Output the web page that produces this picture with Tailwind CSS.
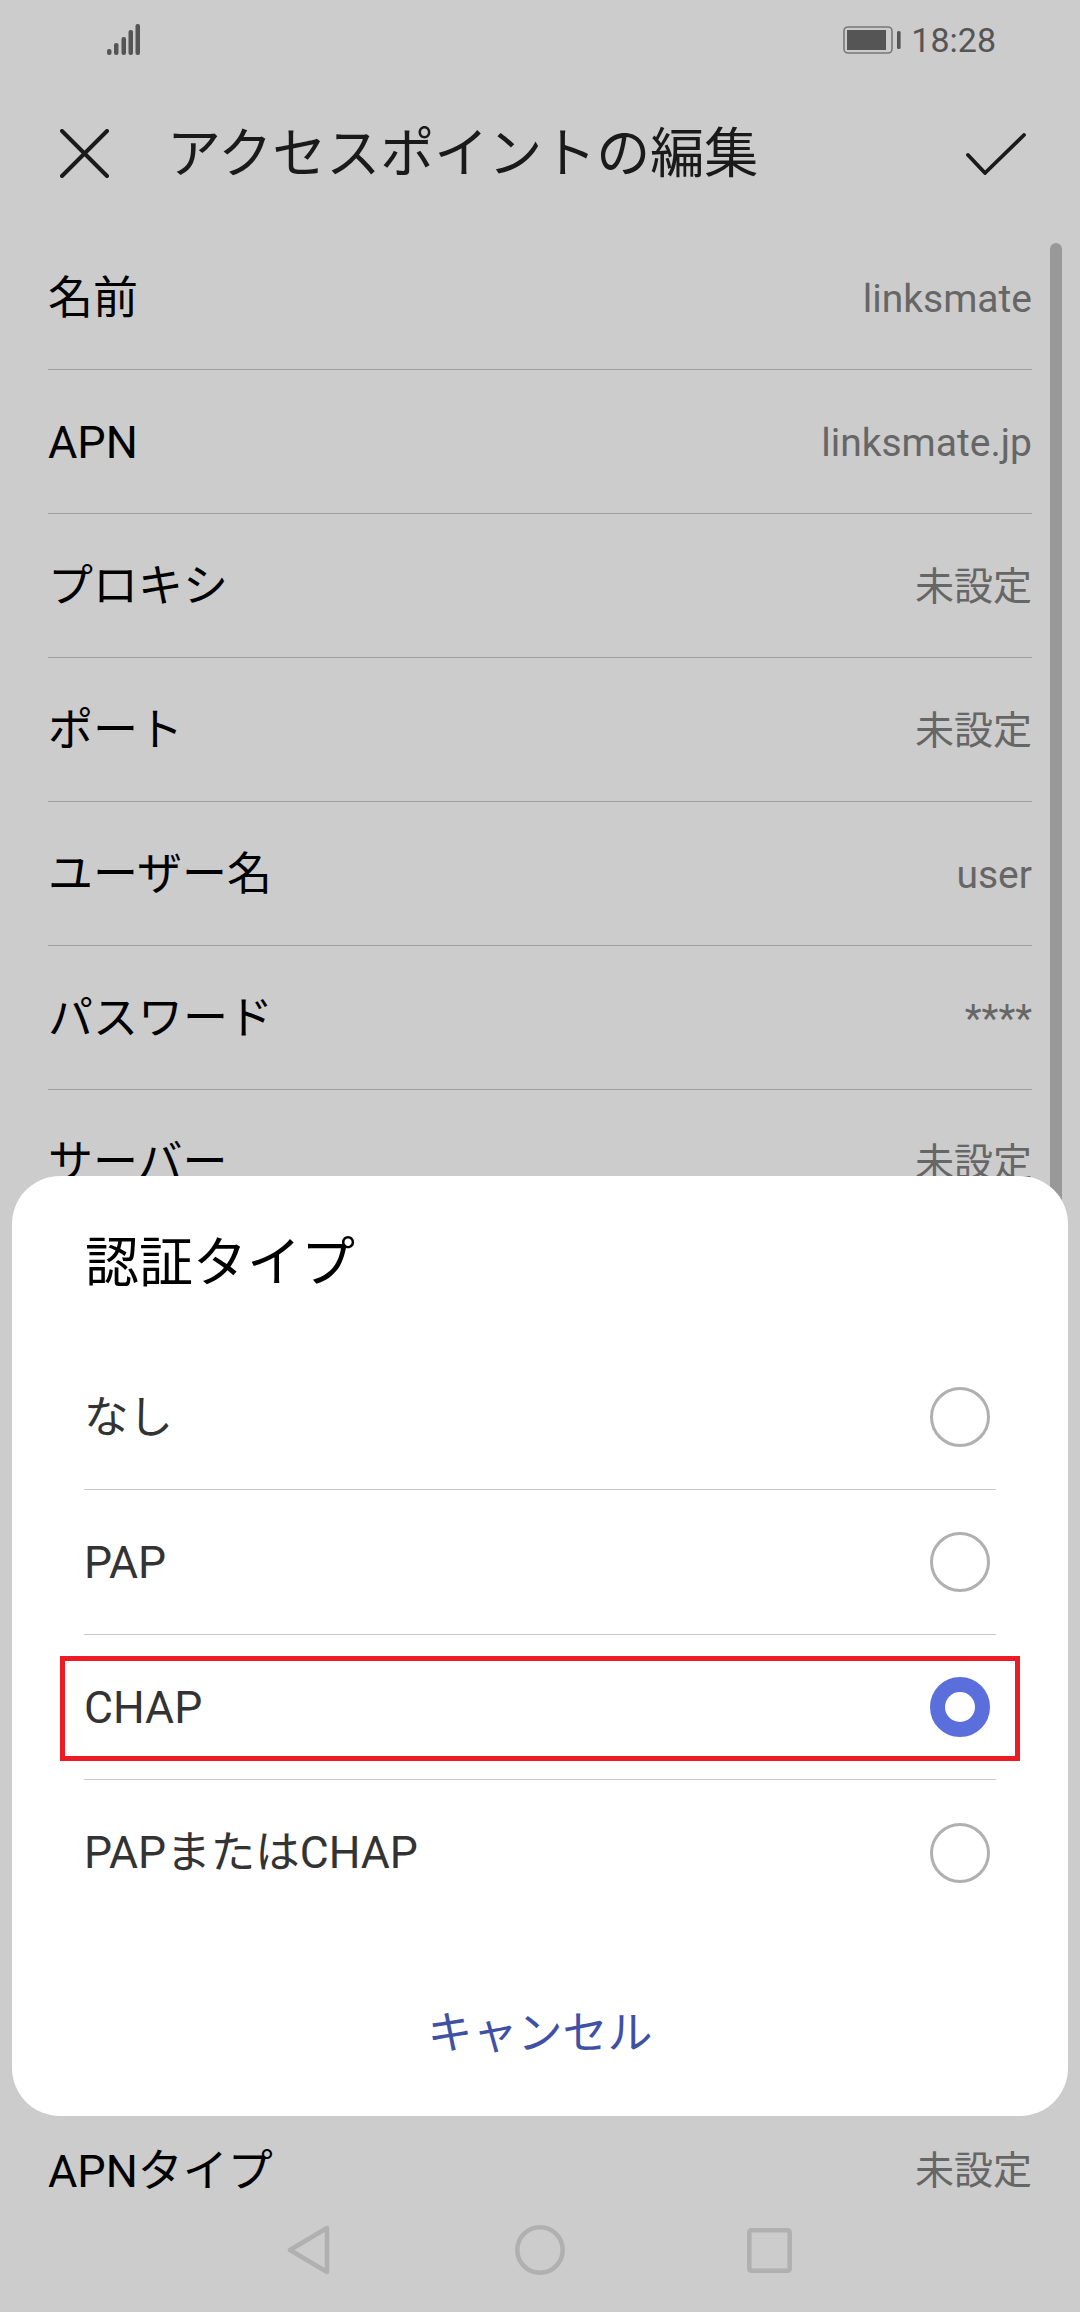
<!DOCTYPE html>
<html lang="ja">
<head>
<meta charset="utf-8">
<script src="https://cdn.jsdelivr.net/npm/@tailwindcss/browser@4"></script>
</head>
<body class="m-0">
<div class="relative w-[1080px] h-[2312px] overflow-hidden bg-[#cccccc] font-['Roboto','Noto_Sans_CJK_JP',sans-serif]">
  <!-- status bar -->
  <div class="flex items-center justify-between h-[79px] pl-[107px] pr-[84px]">
    <svg width="34" height="32" viewBox="0 0 34 32" class="mt-[1px]" fill="#555555">
      <rect x="0" y="25" width="4.5" height="6" rx="2"/>
      <rect x="7" y="19" width="4.5" height="12" rx="2"/>
      <rect x="14.5" y="13" width="4.5" height="18" rx="2"/>
      <rect x="21.5" y="6" width="4.5" height="25" rx="2"/>
      <rect x="28.5" y="0" width="4.5" height="31" rx="2"/>
    </svg>
    <div class="flex items-center gap-[10px] mt-[1px]">
      <svg width="58" height="28" viewBox="0 0 58 28">
        <rect x="1" y="1" width="48" height="26" rx="4" fill="none" stroke="#777777" stroke-width="1.6"/>
        <rect x="4" y="4" width="39" height="20" fill="#555555"/>
        <rect x="54" y="5" width="3.6" height="18" rx="1.5" fill="#555555"/>
      </svg>
      <span class="text-[34px] leading-none text-[#555555]">18:28</span>
    </div>
  </div>
  <!-- header -->
  <div class="flex items-center h-[147px] pl-[60px] pr-[54px]">
    <svg width="49" height="49" viewBox="0 0 49 49" class="shrink-0 mt-[1px]" fill="none" stroke="#1a1a1a" stroke-width="4" stroke-linecap="round">
      <path d="M2 2L47 47M47 2L2 47"/>
    </svg>
    <h1 class="ml-[58px] mt-[4px] flex-1 text-[54px] leading-none font-normal text-[#1a1a1a]">アクセスポイントの編集</h1>
    <svg width="62" height="42" viewBox="0 0 62 42" class="shrink-0 mt-[2px]" fill="none" stroke="#1a1a1a" stroke-width="3.8" stroke-linecap="round" stroke-linejoin="round">
      <path d="M4 22L21 40L60 2"/>
    </svg>
  </div>
  <!-- list -->
  <div class="mx-[48px]">
    <div class="flex items-center justify-between h-[144px] pt-[3px] border-b border-[#a0a0a0]"><span class="text-[45px] text-black">名前</span><span class="text-[39px] text-[#666666]">linksmate</span></div>
    <div class="flex items-center justify-between h-[144px] pt-[3px] border-b border-[#a0a0a0]"><span class="text-[45px] text-black">APN</span><span class="text-[39px] text-[#666666]">linksmate.jp</span></div>
    <div class="flex items-center justify-between h-[144px] pt-[3px] border-b border-[#a0a0a0]"><span class="text-[45px] text-black">プロキシ</span><span class="text-[39px] text-[#666666]">未設定</span></div>
    <div class="flex items-center justify-between h-[144px] pt-[3px] border-b border-[#a0a0a0]"><span class="text-[45px] text-black">ポート</span><span class="text-[39px] text-[#666666]">未設定</span></div>
    <div class="flex items-center justify-between h-[144px] pt-[3px] border-b border-[#a0a0a0]"><span class="text-[45px] text-black">ユーザー名</span><span class="text-[39px] text-[#666666]">user</span></div>
    <div class="flex items-center justify-between h-[144px] pt-[3px] border-b border-[#a0a0a0]"><span class="text-[45px] text-black">パスワード</span><span class="text-[39px] text-[#666666]">****</span></div>
    <div class="flex items-center justify-between h-[144px] pt-[3px] border-b border-[#a0a0a0]"><span class="text-[45px] text-black">サーバー</span><span class="text-[39px] text-[#666666]">未設定</span></div>
    <!-- rows covered by the dialog -->
    <div class="h-[864px]"></div>
    <div class="flex items-center justify-between h-[144px] pt-[3px]"><span class="text-[45px] text-black">APNタイプ</span><span class="text-[39px] text-[#666666]">未設定</span></div>
  </div>
  <!-- scrollbar -->
  <div class="absolute left-[1050px] top-[243px] w-[12px] h-[1000px] rounded-full bg-[#999999]"></div>
  <!-- nav bar -->
  <div class="absolute left-0 right-0 top-[2225px] flex items-center h-[50px] pl-[287px]">
    <svg width="43" height="50" viewBox="0 0 43 50" fill="none" stroke="#b0b0b0" stroke-width="4.5" stroke-linejoin="round"><path d="M40 3V47L3 25Z"/></svg>
    <svg width="50" height="50" viewBox="0 0 50 50" class="ml-[185px]" fill="none" stroke="#b0b0b0" stroke-width="4.5"><circle cx="25" cy="25" r="22.7"/></svg>
    <svg width="45" height="45" viewBox="0 0 45 45" class="ml-[182px]" fill="none" stroke="#b0b0b0" stroke-width="4.5" stroke-linejoin="round"><rect x="2.3" y="2.3" width="40.4" height="40.4" rx="2"/></svg>
  </div>
  <!-- dialog -->
  <div class="absolute left-[12px] top-[1176px] w-[1056px] h-[940px] rounded-[48px] bg-white">
    <h2 class="pl-[73px] pt-[59px] text-[54px] leading-[58px] font-normal text-black">認証タイプ</h2>
    <div class="mx-[72px] mt-[52px]">
      <div class="flex items-center justify-between h-[145px] border-b border-[#c8c8c8]"><span class="mt-[2px] text-[44.5px] text-[#333333]">なし</span><span class="w-[60px] h-[60px] rounded-full border-[3px] border-[#b0b0b0] mr-[6px]"></span></div>
      <div class="flex items-center justify-between h-[145px] border-b border-[#c8c8c8]"><span class="mt-[2px] text-[44.5px] text-[#333333]">PAP</span><span class="w-[60px] h-[60px] rounded-full border-[3px] border-[#b0b0b0] mr-[6px]"></span></div>
      <div class="flex items-center justify-between h-[145px] border-b border-[#c8c8c8]"><span class="mt-[2px] text-[44.5px] text-[#333333]">CHAP</span><span class="w-[60px] h-[60px] rounded-full border-[15px] border-[#5b6fdc] mr-[6px]"></span></div>
      <div class="flex items-center justify-between h-[145px]"><span class="mt-[2px] text-[44.5px] text-[#333333]">PAPまたはCHAP</span><span class="w-[60px] h-[60px] rounded-full border-[3px] border-[#b0b0b0] mr-[6px]"></span></div>
    </div>
    <div class="mt-[79px] text-center text-[45px] leading-[60px] text-[#3f51a5]">キャンセル</div>
    <!-- red highlight -->
    <div class="absolute left-[48px] top-[480px] w-[960px] h-[105px] border-[5px] border-[#ed1c24]"></div>
  </div>
</div>
</body>
</html>
